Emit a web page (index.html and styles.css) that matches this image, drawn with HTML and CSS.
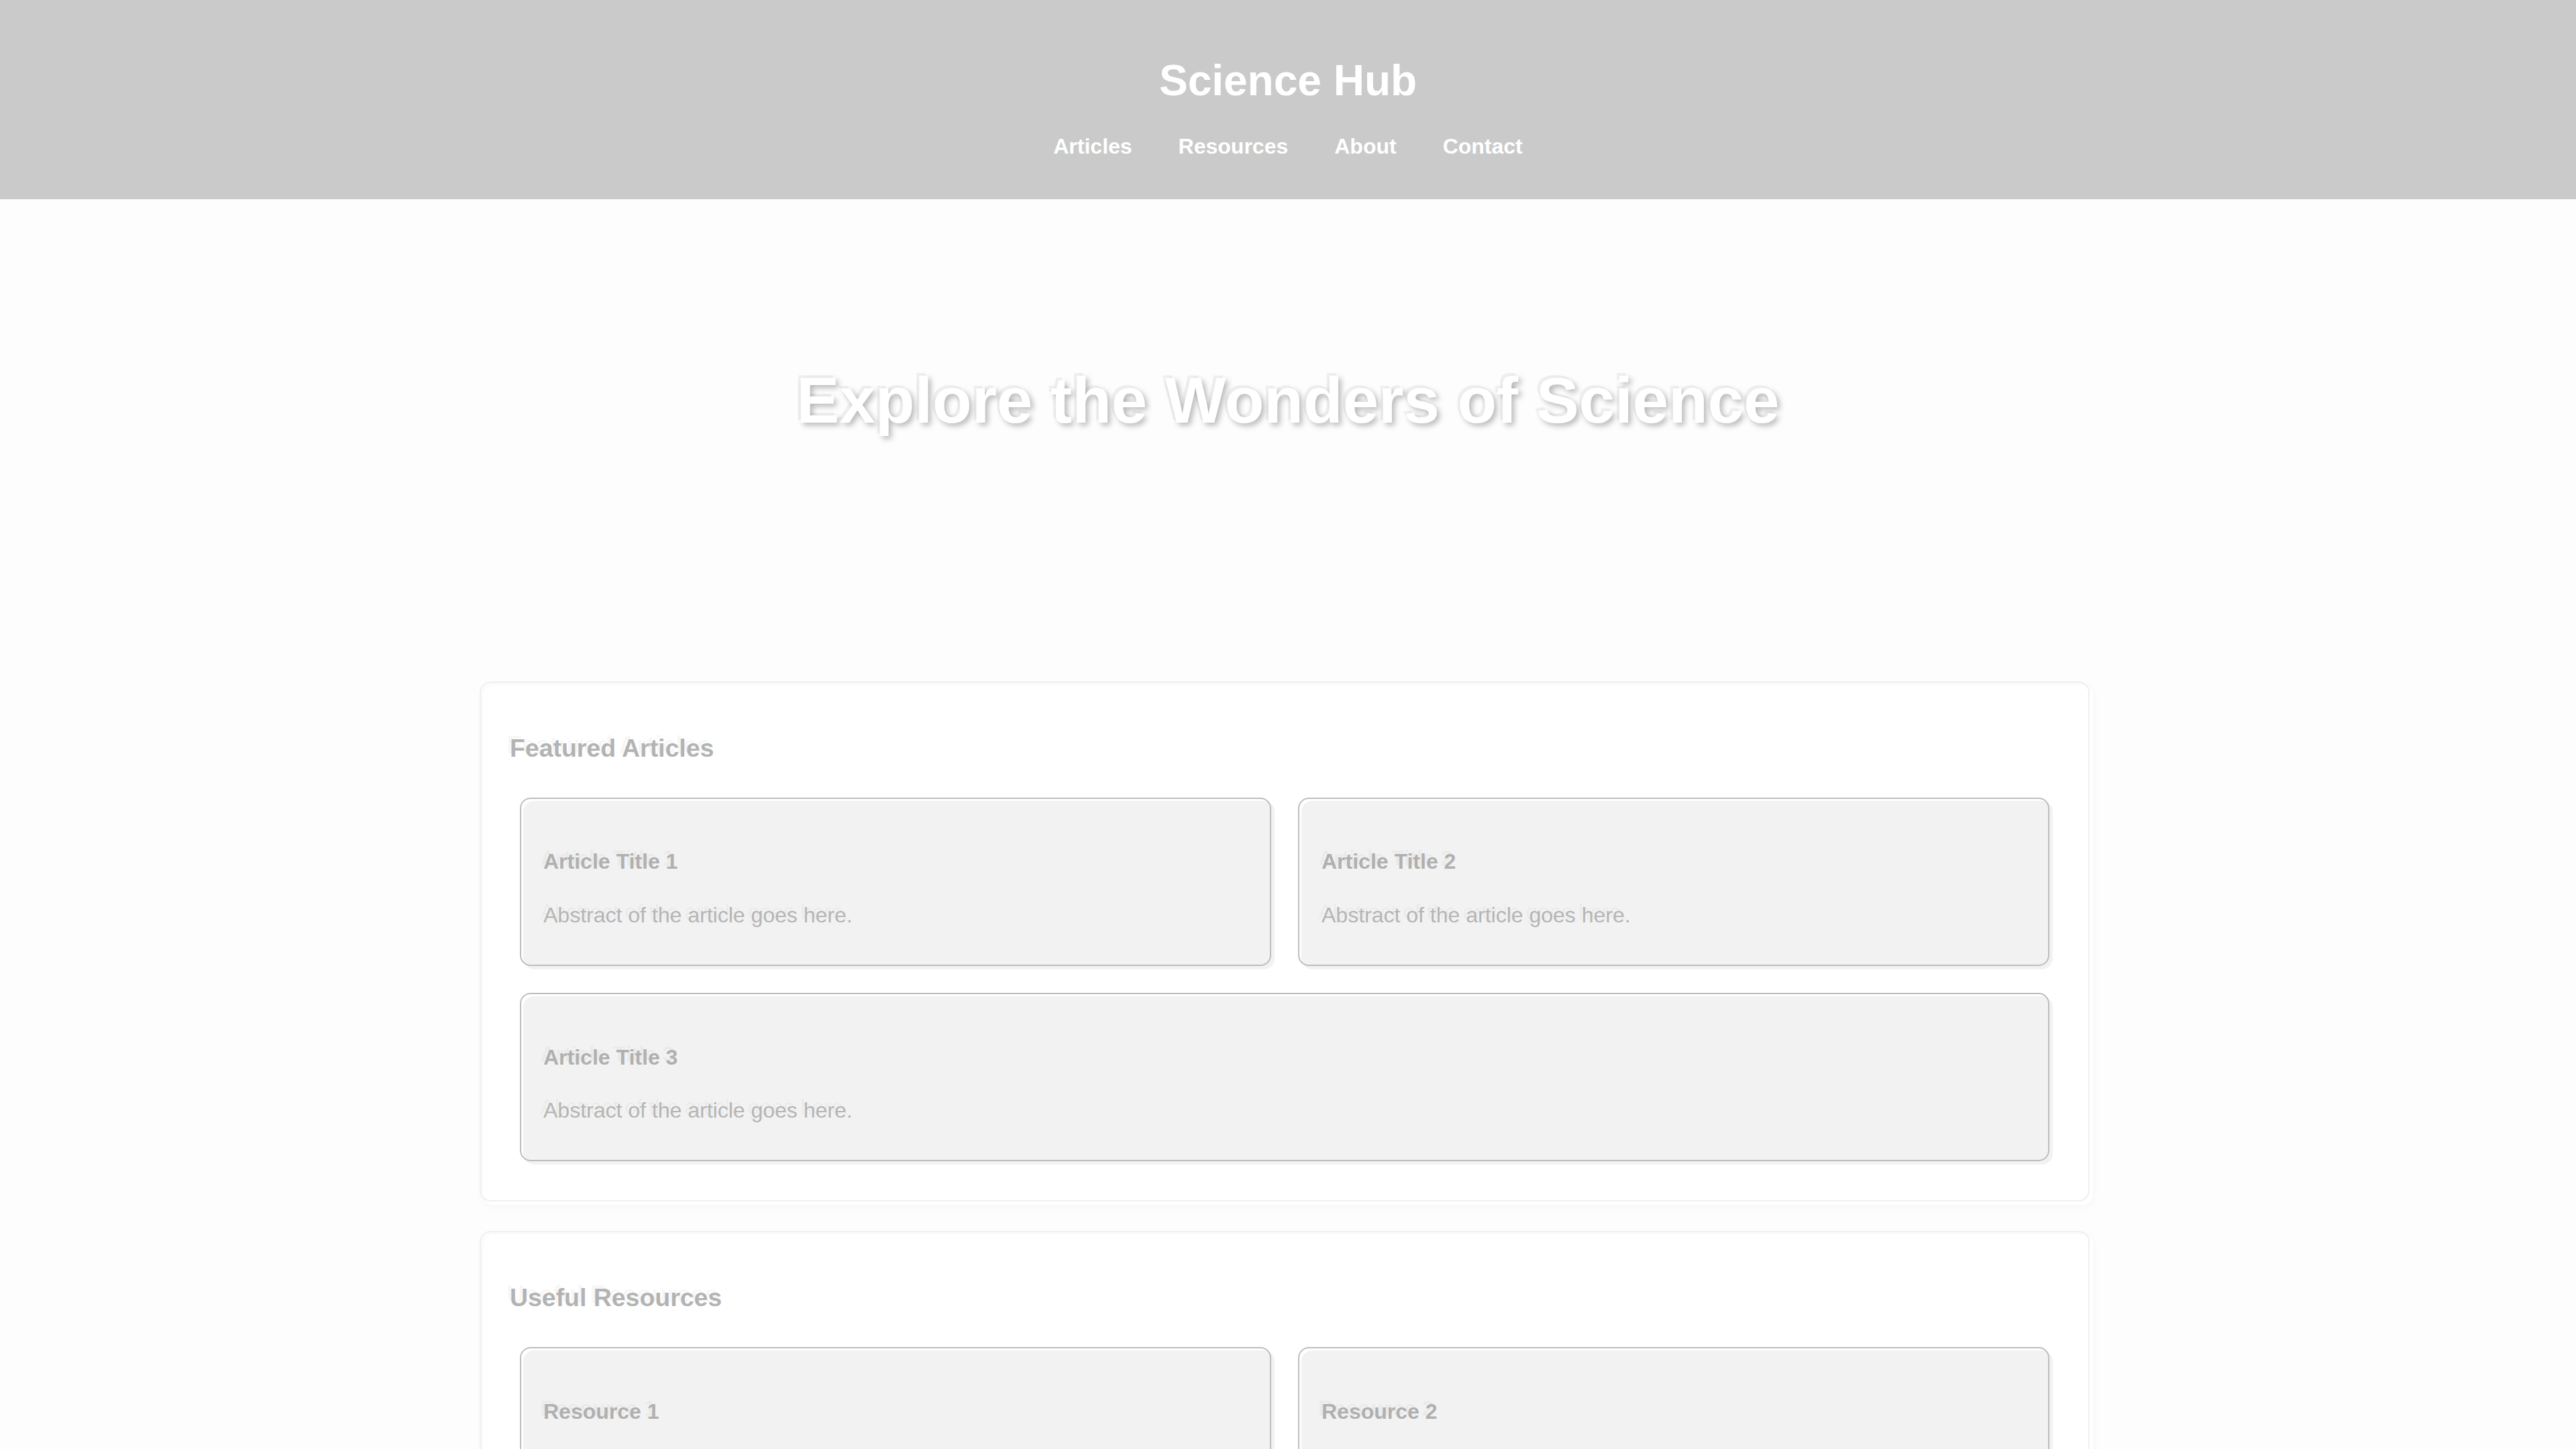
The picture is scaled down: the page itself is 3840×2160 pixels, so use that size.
FILE: index.html
```html
<!DOCTYPE html>
<html lang="en">
<head>
<meta charset="utf-8">
<title>Science Hub</title>
<link rel="stylesheet" href="styles.css">
</head>
<body>
<header class="site-header">
  <h1 class="site-title">Science Hub</h1>
  <nav class="site-nav">
    <a class="nav-link" href="#articles">Articles</a>
    <a class="nav-link" href="#resources">Resources</a>
    <a class="nav-link" href="#about">About</a>
    <a class="nav-link" href="#contact">Contact</a>
  </nav>
</header>

<section class="hero">
  <h2 class="hero-title">Explore the Wonders of Science</h2>
</section>

<main class="content">
  <section class="panel" id="articles">
    <h3 class="panel-title">Featured Articles</h3>
    <div class="card-list">
      <article class="card">
        <h4 class="card-title">Article Title 1</h4>
        <p class="card-text">Abstract of the article goes here.</p>
      </article>
      <article class="card">
        <h4 class="card-title">Article Title 2</h4>
        <p class="card-text">Abstract of the article goes here.</p>
      </article>
      <article class="card">
        <h4 class="card-title">Article Title 3</h4>
        <p class="card-text">Abstract of the article goes here.</p>
      </article>
    </div>
  </section>

  <section class="panel" id="resources">
    <h3 class="panel-title">Useful Resources</h3>
    <div class="card-list">
      <article class="card">
        <h4 class="card-title">Resource 1</h4>
        <p class="card-text">Description of the resource goes here.</p>
      </article>
      <article class="card">
        <h4 class="card-title">Resource 2</h4>
        <p class="card-text">Description of the resource goes here.</p>
      </article>
    </div>
  </section>
</main>

<footer class="site-footer">
  <p class="footer-text">&copy; 2024 Science Hub. All rights reserved.</p>
</footer>
</body>
</html>
```

FILE: styles.css
```css
* {
  box-sizing: border-box;
}

body {
  margin: 0;
  background: #fdfdfd;
  font-family: "Liberation Sans", Arial, sans-serif;
}

/* Header */
.site-header {
  background: #cacaca;
  padding: 40px 20px 60px;
  text-align: center;
  color: #ffffff;
}

.site-title {
  margin: 43px 0;
  font-size: 64px;
  font-weight: bold;
}

.site-nav {
  display: flex;
  justify-content: center;
  gap: 69px;
}

.nav-link {
  color: #ffffff;
  text-decoration: none;
  font-weight: bold;
  font-size: 32px;
  line-height: normal;
}

/* Hero */
.hero {
  height: 600px;
  display: flex;
  align-items: center;
  justify-content: center;
}

.hero-title {
  margin: 0;
  font-size: 96px;
  font-weight: bold;
  color: #ffffff;
  text-shadow: -4px -4px 0 rgba(0, 0, 0, 0.05), 4px 4px 8px rgba(0, 0, 0, 0.28);
}

/* Content */
.content {
  padding-top: 124px;
}

.panel {
  position: relative;
  max-width: 2400px;
  margin: 0 auto 44px;
  padding: 40px;
  background: #ffffff;
  border-radius: 16px;
  box-shadow: 0 2px 14px rgba(0, 0, 0, 0.035);
}

.panel::before {
  content: "";
  position: absolute;
  top: -5px;
  left: -5px;
  right: 5px;
  bottom: 5px;
  border: 2px solid #efefef;
  border-radius: 16px;
  pointer-events: none;
}

.panel-title {
  margin: 32.5px 0 37.44px;
  font-size: 37.44px;
  font-weight: bold;
  color: #b3b3b3;
  text-shadow: -5px -5px 0 rgba(0, 0, 0, 0.04);
}

.card-list {
  display: flex;
  flex-wrap: wrap;
}

.card {
  position: relative;
  flex: 1 1 1000px;
  margin: 20px;
  padding: 30px;
  background: #f2f2f2;
  border-radius: 16px;
}

.card::before {
  content: "";
  position: absolute;
  top: -5px;
  left: -5px;
  right: 5px;
  bottom: 5px;
  border: 2px solid #bdbdbd;
  border-radius: 16px;
  pointer-events: none;
}

.card-title {
  margin: 42.56px 0;
  font-size: 32px;
  font-weight: bold;
  color: #b0b0b0;
  text-shadow: -5px -5px 0 rgba(0, 0, 0, 0.04);
}

.card-text {
  margin: 32px 0;
  font-size: 32px;
  color: #b5b5b5;
  text-shadow: -5px -5px 0 rgba(0, 0, 0, 0.04);
}

/* Footer */
.site-footer {
  background: #cacaca;
  padding: 20px;
  text-align: center;
  color: #ffffff;
}

.footer-text {
  margin: 0;
  font-size: 28px;
}
```
